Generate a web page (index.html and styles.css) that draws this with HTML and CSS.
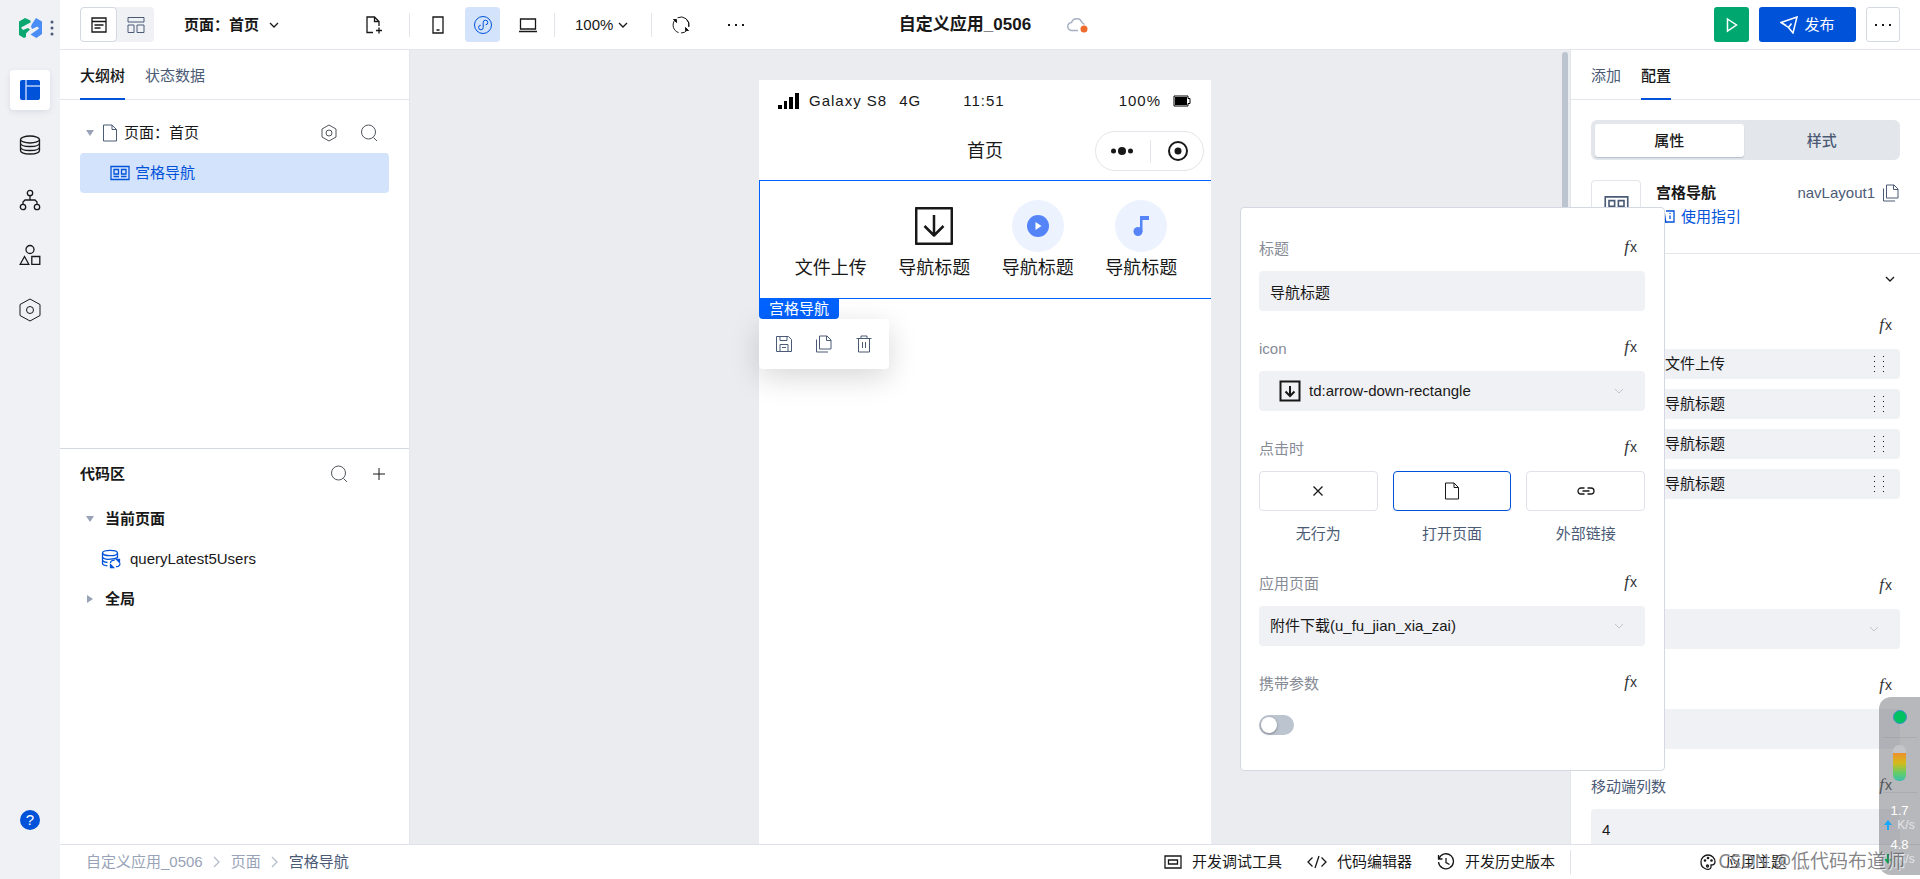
FILE: index.html
```html
<!DOCTYPE html>
<html lang="zh-CN">
<head>
<meta charset="utf-8">
<meta name="viewport" content="width=device-width, initial-scale=1">
<title>自定义应用_0506</title>
<link rel="stylesheet" href="styles.css">
</head>
<body>
<svg class="sprite" aria-hidden="true">
  <symbol id="i-chevron" viewBox="0 0 10 10"><path d="M1 3l4 4 4-4"/></symbol>
  <symbol id="i-next" viewBox="0 0 10 12"><path d="M2 1l5 5-5 5"/></symbol>
  <symbol id="i-search" viewBox="0 0 18 18"><circle cx="8.500" cy="8" r="7"/><path d="M13.500 13.500l3.500 3.500"/></symbol>
  <symbol id="i-hex" viewBox="0 0 22 24"><path d="M11 1l10 5.500v11L11 23 1 17.500v-11z"/><circle cx="11" cy="12" r="3.500"/></symbol>
  <symbol id="i-hex-small" viewBox="0 0 16 18"><path d="M8 1l7 4v8l-7 4-7-4V5z"/><circle cx="8" cy="9" r="3"/></symbol>
  <symbol id="i-page" viewBox="0 0 16 18"><path d="M1.500 1h8.500l4.500 4.500V17h-13zM10 1v4.500h4.500"/></symbol>
  <symbol id="i-copy" viewBox="0 0 18 18"><path d="M4.500 1h7.500l4 4v9H4.500zM11.500 1v4.500H16M1.500 4.500V17H13"/></symbol>
  <symbol id="i-layout" viewBox="0 0 20 16"><path d="M1 1.500h18v13H1zM4 4.500h4.500v4.500H4zM11.500 4.500H16v4.500h-4.500zM3.500 11.500H9M11 11.500h5.500"/></symbol>
  <symbol id="i-grip" viewBox="0 0 12 18"><path d="M1 1.500h1M1 6.500h1M1 11.500h1M1 16.500h1M10 1.500h1M10 6.500h1M10 11.500h1M10 16.500h1" stroke-width="1"/></symbol>
  <symbol id="i-down-box" viewBox="0 0 22 22"><path d="M1.500 1.500h19v19h-19zM11 6v10M6.500 11.500L11 16l4.500-4.500"/></symbol>
  <symbol id="i-dots" viewBox="0 0 18 4"><path d="M1 2h2M8 2h2M15 2h2" stroke-width="2"/></symbol>
</svg>
<div class="app">
  <nav class="rail" aria-label="主导航">
    <div class="brand">
      <svg width="24" height="20" viewBox="0 0 24 20"><path fill="#0aa870" d="M0 3.500L6 0l5.500 2.500v2L2 9.500 4 12l5-2 2 1.500-4 4V19l-2 1-5-3z"/><path fill="#4a8df6" d="M12 8.500L13 6l4-6 6 3.500V16l-5.500 4-6-3.500L20 10.500l-1.500-2L13 11z"/></svg>
      <svg width="4" height="16" viewBox="0 0 4 16"><g fill="#4b5b76"><circle cx="2" cy="2" r="1.500"/><circle cx="2" cy="8" r="1.500"/><circle cx="2" cy="14" r="1.500"/></g></svg>
    </div>
    <button class="rail-btn is-active" aria-label="页面设计"><svg width="20" height="20" viewBox="0 0 20 20"><rect width="20" height="20" rx="2" fill="#0052d9"/><path d="M6 0v20M6 6h14" stroke="#b9d0f6" stroke-width="1.500"/></svg></button>
    <button class="rail-btn" aria-label="数据源"><svg class="ic ic-bold" width="22" height="20" viewBox="0 0 22 20"><ellipse cx="11" cy="4.500" rx="9.500" ry="3.500"/><path d="M1.500 4.500v11c0 2 4 3.500 9.500 3.500s9.500-1.500 9.500-3.500v-11M1.500 8c0 2.200 4 3.500 9.500 3.500S20.500 10.200 20.500 8M1.500 12c0 2.200 4 3.500 9.500 3.500s9.500-1.300 9.500-3.500"/></svg></button>
    <button class="rail-btn" aria-label="流程"><svg class="ic ic-bold" width="22" height="22" viewBox="0 0 22 22"><circle cx="11" cy="4" r="2.700"/><circle cx="4" cy="18" r="2.700"/><circle cx="18" cy="18" r="2.700"/><path d="M11 6.700V11M4 15.300V13l2-2h10l2 2v2.300"/></svg></button>
    <button class="rail-btn" aria-label="素材"><svg class="ic ic-bold" width="22" height="22" viewBox="0 0 22 22"><circle cx="11" cy="5.500" r="4"/><path d="M5.500 12.500l4.300 7.800H1.200zM12.800 12.500h8v7.800h-8z"/></svg></button>
    <button class="rail-btn" aria-label="设置"><svg class="ic" width="22" height="24"><use href="#i-hex"/></svg></button>
    <button class="rail-help" aria-label="帮助">?</button>
  </nav>

  <div class="main">
    <header class="topbar">
      <div class="tools">
        <div class="view-switch">
          <button class="is-active" aria-label="大纲视图"><svg class="ic ic-bold" width="18" height="18" viewBox="0 0 18 18"><path d="M2 2h14v14H2zM2 5.500h14M4.500 9h9M4.500 12h6"/></svg></button>
          <button aria-label="布局视图"><svg class="ic ic-slate" width="18" height="18" viewBox="0 0 18 18"><path d="M1 1.500h16V6H1zM1 9h6v7.500H1zM10 9h7v7.500h-7z"/></svg></button>
        </div>
        <button class="page-pick">页面：首页 <svg class="ic ic-bold" width="10" height="10"><use href="#i-chevron"/></svg></button>
        <button class="tool tool-new" aria-label="新建页面"><svg class="ic ic-bold" width="18" height="18" viewBox="0 0 18 18"><path d="M8 16.500H2V1h7.500L14 5.500V10M9.500 1v4.500H14M14 11.500v6M11 14.500h6"/></svg></button>
        <span class="rule"></span>
        <div class="devices">
          <button class="tool" aria-label="手机"><svg class="ic ic-bold" width="12" height="18" viewBox="0 0 12 18"><path d="M1 1h10v16H1zM4.500 14h3"/></svg></button>
          <button class="tool is-active" aria-label="小程序"><svg class="ic ic-blue" width="20" height="20" viewBox="0 0 20 20"><circle cx="10" cy="10" r="8.500"/><path d="M7.800 10.200a2.300 2.300 0 1 0 2.400 2.300v-5a2.300 2.300 0 1 1 2.400 2.300"/></svg></button>
          <button class="tool" aria-label="电脑"><svg class="ic ic-bold" width="18" height="16" viewBox="0 0 18 16"><path d="M1.500 2h15v10h-15zM0 14.500h18"/></svg></button>
        </div>
        <span class="rule"></span>
        <button class="zoom-pick">100% <svg class="ic ic-bold" width="10" height="10"><use href="#i-chevron"/></svg></button>
        <span class="rule"></span>
        <button class="tool tool-refresh" aria-label="刷新"><svg class="ic" width="20" height="20" viewBox="0 0 20 20"><path d="M7.500 17.600A8 8 0 0 1 3.500 5.500M6.500 2.800a8 8 0 0 1 11.300 9M16.300 15a8 8 0 0 1-6.300 3M16 4.800a8 8 0 0 1 1.800 7"/><path fill="#181818" d="M2.500 4.500h3v3zM17.500 15.500h-3v-3z"/></svg></button>
        <button class="tool tool-more" aria-label="更多"><svg class="ic" width="18" height="4"><use href="#i-dots"/></svg></button>
      </div>
      <div class="doc">
        <h1>自定义应用_0506</h1>
        <svg width="22" height="16" viewBox="0 0 22 16"><path d="M11 13.500H5a4 4 0 0 1-.5-8 5.500 5.500 0 0 1 10.500 0l2.500 2" fill="none" stroke="#a6b0c2" stroke-width="1.500"/><circle cx="17" cy="12" r="3.500" fill="#ed6c2d"/></svg>
      </div>
      <div class="actions">
        <button class="btn-run" aria-label="预览"><svg width="14" height="16" viewBox="0 0 14 16"><path d="M2.500 2l9 6-9 6z" fill="none" stroke="#fff" stroke-width="1.500"/></svg></button>
        <button class="btn-publish"><svg width="18" height="18" viewBox="0 0 18 18"><path d="M1 6.500L17 1l-4 16-4.500-5.500zM8.500 11.500l3-4M1 6.500l5 3" fill="none" stroke="#fff" stroke-width="1.500"/></svg>发布</button>
        <button class="btn-more" aria-label="更多操作"><svg class="ic" width="18" height="4"><use href="#i-dots"/></svg></button>
      </div>
    </header>

    <div class="work">
      <aside class="outline">
        <div class="tabs"><button class="tab is-active">大纲树</button><button class="tab">状态数据</button></div>
        <div class="tree">
          <div class="row"><span class="caret caret-open"></span><svg class="ic ic-slate" width="16" height="18"><use href="#i-page"/></svg><span class="grow">页面：首页</span>
            <button class="mini" aria-label="页面设置"><svg class="ic ic-gray" width="16" height="18"><use href="#i-hex-small"/></svg></button>
            <button class="mini" aria-label="搜索组件"><svg class="ic ic-gray" width="18" height="18"><use href="#i-search"/></svg></button></div>
          <div class="row row-selected"><svg class="ic ic-blue ic-bold" width="20" height="16"><use href="#i-layout"/></svg>宫格导航</div>
        </div>
        <section class="code">
          <div class="code-head"><h2>代码区</h2>
            <button class="mini" aria-label="搜索代码"><svg class="ic ic-gray" width="18" height="18"><use href="#i-search"/></svg></button>
            <button class="mini" aria-label="新建代码"><svg class="ic" width="12" height="12" viewBox="0 0 12 12"><path d="M6 0v12M0 6h12"/></svg></button></div>
          <div class="row group"><span class="caret caret-open"></span>当前页面</div>
          <div class="row query"><svg class="ic ic-blue ic-bold" width="20" height="20" viewBox="0 0 20 20"><ellipse cx="9" cy="4" rx="7.500" ry="2.700"/><path d="M1.500 4v10.500c0 1.300 2 2 5 2.300M16.500 4v5M1.500 8c1 2 5 2.500 8 2.200 3 0 5-.5 7-1.500M1.500 11.500c1 1.300 3 1.800 5 2"/><path d="M9.500 14c0-2 2-3 4-2.500M19 14.500c0 2-2 3.500-4 3"/><path fill="#0052d9" d="M15.500 10.500h3v3zM9.500 18.500v-3l3 3z"/></svg>queryLatest5Users</div>
          <div class="row group"><span class="caret"></span>全局</div>
        </section>
      </aside>

      <main class="canvas">
        <div class="stage">
          <div class="phone">
            <div class="status">
              <div class="status-left"><svg width="22" height="16" viewBox="0 0 22 16"><path d="M1 12h4v4H1zM7 8h3v8H7zM12 4h4v12h-4zM18 0h4v16h-4z"/></svg><span>Galaxy S8</span><span>4G</span></div>
              <span>11:51</span>
              <div class="status-right"><span>100%</span><svg width="18" height="12" viewBox="0 0 18 12"><path d="M1 1h14v2.500h2v5h-2V11H1z" fill="none" stroke="#000"/><path d="M2 2h12v8H2z"/></svg></div>
            </div>
            <div class="navbar"><span></span><span>首页</span>
              <div class="capsule"><svg width="22" height="8" viewBox="0 0 22 8"><g fill="#181818"><circle cx="2.500" cy="4" r="2.500"/><circle cx="11" cy="4" r="4"/><circle cx="19.500" cy="4" r="2.500"/></g></svg><i></i><svg width="20" height="20" viewBox="0 0 20 20"><circle cx="10" cy="10" r="9" fill="none" stroke="#181818" stroke-width="2"/><circle cx="10" cy="10" r="3.500" fill="#181818"/></svg></div>
            </div>
            <div class="grid-nav">
              <div class="cell"><div class="pic"></div>文件上传</div>
              <div class="cell"><div class="pic"><svg width="38" height="38" viewBox="0 0 38 38"><path d="M1.200 1.200h35.600v35.600H1.200zM19 8v21M9.500 19l9.500 9.500 9.500-9.500" fill="none" stroke="#181818" stroke-width="2.500" stroke-linejoin="round"/></svg></div>导航标题</div>
              <div class="cell"><div class="pic pic-round"><svg width="22" height="22" viewBox="0 0 22 22"><circle cx="11" cy="11" r="11" fill="#5584f8"/><path d="M8.500 7v8l6-4z" fill="#fff"/></svg></div>导航标题</div>
              <div class="cell"><div class="pic pic-round"><svg width="16" height="20" viewBox="0 0 16 20"><path d="M7 0h9v4H9.500v12H7z" fill="#5584f8"/><circle cx="5" cy="15.500" r="4.500" fill="#5584f8"/></svg></div>导航标题</div>
              <div class="handle">
                <span class="handle-tag">宫格导航</span>
                <div class="handle-tools">
                  <button aria-label="保存"><svg class="ic ic-slate" width="18" height="18" viewBox="0 0 18 18"><path d="M1.500 1.500h12l3 3v12h-15zM5 1.500v4h7v-4M5 16.500v-7h8v7M7 12.500h4"/></svg></button>
                  <button aria-label="复制"><svg class="ic ic-slate" width="18" height="18"><use href="#i-copy"/></svg></button>
                  <button aria-label="删除"><svg class="ic ic-slate" width="18" height="18" viewBox="0 0 18 18"><path d="M1.500 3.500h15M6 3.500V1h6v2.500M3.500 3.500V17h11V3.500M7.500 7v6M10.500 7v6"/></svg></button>
                </div>
              </div>
            </div>
          </div>
        </div>
        <div class="scroll"><div class="scroll-thumb"></div></div>
      </main>

      <aside class="props">
        <div class="tabs"><button class="tab">添加</button><button class="tab is-active">配置</button></div>
        <div class="props-body">
          <div class="segment"><button class="is-active">属性</button><button>样式</button></div>
          <div class="comp">
            <div class="comp-icon"><svg class="ic ic-slate ic-bold" width="25" height="20"><use href="#i-layout"/></svg></div>
            <div class="comp-info">
              <div class="comp-line"><h2>宫格导航</h2><span class="comp-id">navLayout1</span><button class="plain" aria-label="复制标识"><svg class="ic ic-slate" width="18" height="18"><use href="#i-copy"/></svg></button></div>
              <a class="guide" href="#guide"><svg class="ic ic-blue ic-bold" width="20" height="16" viewBox="0 0 20 16"><path d="M10 2h8v11H2V2h6l2 12M14 4v1M14 6.500V10"/></svg>使用指引</a>
            </div>
          </div>
        </div>
        <div class="props-body props-section">
          <button class="fold" aria-label="收起"><svg class="ic ic-bold" width="10" height="10"><use href="#i-chevron"/></svg></button>
          <div class="field">
            <div class="field-head"><button class="fx" aria-label="绑定导航列表"><i>f</i>x</button></div>
            <div class="items">
              <button class="item"><span>文件上传</span><svg class="ic" width="12" height="18"><use href="#i-grip"/></svg></button>
              <button class="item"><span>导航标题</span><svg class="ic" width="12" height="18"><use href="#i-grip"/></svg></button>
              <button class="item"><span>导航标题</span><svg class="ic" width="12" height="18"><use href="#i-grip"/></svg></button>
              <button class="item"><span>导航标题</span><svg class="ic" width="12" height="18"><use href="#i-grip"/></svg></button>
            </div>
          </div>
          <div class="field field-apart">
            <div class="field-head"><button class="fx" aria-label="绑定选项"><i>f</i>x</button></div>
            <div class="box"><select aria-label="选项"><option></option></select><svg class="ic ic-faint" width="10" height="10"><use href="#i-chevron"/></svg></div>
          </div>
          <div class="field">
            <div class="field-head"><button class="fx" aria-label="绑定列数"><i>f</i>x</button></div>
            <div class="box"><input aria-label="列数" type="text"></div>
          </div>
          <div class="field">
            <div class="field-head"><label class="label-dark" for="cols">移动端列数</label><button class="fx" aria-label="绑定移动端列数"><i>f</i>x</button></div>
            <div class="box"><input id="cols" type="text" value="4"></div>
          </div>
        </div>
      </aside>
    </div>

    <footer class="bottombar">
      <nav class="crumbs" aria-label="路径"><a href="#app">自定义应用_0506</a><svg class="ic ic-bold" width="10" height="12"><use href="#i-next"/></svg><a href="#pages">页面</a><svg class="ic ic-bold" width="10" height="12"><use href="#i-next"/></svg><a class="is-current" href="#nav">宫格导航</a></nav>
      <div class="dev">
        <button><svg class="ic ic-bold" width="18" height="16" viewBox="0 0 18 16"><path d="M1 2h16v12H1zM4.500 6h9v4h-9z"/></svg>开发调试工具</button>
        <button><svg class="ic ic-bold" width="20" height="16" viewBox="0 0 20 16"><path d="M5.500 3.500L1 8l4.500 4.500M14.500 3.500L19 8l-4.500 4.500M12 2L8 14"/></svg>代码编辑器</button>
        <button><svg class="ic ic-bold" width="18" height="18" viewBox="0 0 18 18"><path d="M2 5.500A7.500 7.500 0 1 1 1.500 9M1.500 2v4h4M9 5v4.500l3.500 2"/></svg>开发历史版本</button>
      </div>
      <div class="theme"><button><svg class="ic ic-bold" width="16" height="18" viewBox="0 0 16 18"><path d="M5 15.500C2 14.500 1 12 1 9a7 7 0 0 1 14 0c0 3-2 3-4 3v2c0 2-3 3.500-6 1.500z"/><circle cx="5" cy="7.500" r=".7"/><circle cx="8" cy="5" r=".7"/><circle cx="11.500" cy="7.500" r=".7"/><circle cx="7.500" cy="13" r="1"/></svg>应用主题</button></div>
    </footer>
  </div>

  <form class="popup">
    <div class="field">
      <div class="field-head"><label for="p-title">标题</label><button type="button" class="fx" aria-label="绑定标题"><i>f</i>x</button></div>
      <div class="box"><input id="p-title" type="text" value="导航标题"></div>
    </div>
    <div class="field">
      <div class="field-head"><label for="p-icon">icon</label><button type="button" class="fx" aria-label="绑定图标"><i>f</i>x</button></div>
      <div class="box box-icon"><svg class="ic ic-heavy" width="22" height="22"><use href="#i-down-box"/></svg><select id="p-icon"><option>td:arrow-down-rectangle</option></select><svg class="ic ic-faint" width="10" height="10"><use href="#i-chevron"/></svg></div>
    </div>
    <div class="field" role="radiogroup" aria-label="点击时">
      <div class="field-head"><span class="legend">点击时</span><button type="button" class="fx" aria-label="绑定点击行为"><i>f</i>x</button></div>
      <div class="choices">
        <label class="choice"><input type="radio" name="act"><span class="choice-box"><svg class="ic ic-bold" width="10" height="10" viewBox="0 0 10 10"><path d="M.5.5l9 9M9.500.5l-9 9"/></svg></span>无行为</label>
        <label class="choice"><input type="radio" name="act" checked><span class="choice-box"><svg class="ic" width="16" height="18"><use href="#i-page"/></svg></span>打开页面</label>
        <label class="choice"><input type="radio" name="act"><span class="choice-box"><svg class="ic ic-bold" width="18" height="10" viewBox="0 0 18 10"><path d="M7.500 2H4a3 3 0 0 0 0 6h3.500M10.500 2H14a3 3 0 0 1 0 6h-3.500M5.500 5h7"/></svg></span>外部链接</label>
      </div>
    </div>
    <div class="field">
      <div class="field-head"><label for="p-page">应用页面</label><button type="button" class="fx" aria-label="绑定应用页面"><i>f</i>x</button></div>
      <div class="box"><select id="p-page"><option>附件下载(u_fu_jian_xia_zai)</option></select><svg class="ic ic-faint" width="10" height="10"><use href="#i-chevron"/></svg></div>
    </div>
    <div class="field">
      <div class="field-head"><label for="p-param">携带参数</label><button type="button" class="fx" aria-label="绑定携带参数"><i>f</i>x</button></div>
      <input class="switch" id="p-param" type="checkbox">
    </div>
  </form>

  <div class="monitor">
    <span class="lamp"></span>
    <div class="gauge-wrap"><span class="gauge"></span></div>
    <strong>1.7</strong>
    <span class="rate"><svg width="8" height="10" viewBox="0 0 8 10"><path d="M4 0l4 5H5v5H3V5H0z" fill="#1aa7ff"/></svg>K/s</span>
    <strong>4.8</strong>
    <span class="rate"><svg width="8" height="10" viewBox="0 0 8 10"><path d="M4 10l4-5H5V0H3v5H0z" fill="#0aa84f"/></svg>K/s</span>
  </div>
  <div class="watermark">CSDN @低代码布道师</div>
</div>
</body>
</html>
```
FILE: styles.css
```css
* { box-sizing: border-box; }
body {
  margin: 0;
  font: 15px/24px "Liberation Sans", "Noto Sans CJK SC", sans-serif;
  color: #181818;
  background: #fff;
}
button, input, select { font: inherit; color: inherit; }
button { border: 0; padding: 0; background: none; white-space: nowrap; }
h1, h2 { margin: 0; font-size: 15px; line-height: 24px; }
a { text-decoration: none; color: inherit; }
svg { display: block; flex: none; }
.sprite { position: absolute; width: 0; height: 0; }

.ic { fill: none; stroke: #181818; stroke-width: 1; }
.ic-bold { stroke-width: 1.3; }
.ic-heavy { stroke-width: 2; }
.ic-slate { stroke: #4b5b76; }
.ic-gray { stroke: #50545c; }
.ic-blue { stroke: #0052d9; }
.ic-faint { stroke: #c0c6d0; }

.app { position: relative; display: flex; height: 100vh; overflow: hidden; }
.main { flex: 1; min-width: 0; display: flex; flex-direction: column; }

/* Left rail */
.rail {
  flex: none; width: 60px; padding: 0 10px 49px;
  display: flex; flex-direction: column; gap: 15px;
  background: #f0f1f5;
}
.brand { display: flex; align-items: center; gap: 7px; height: 55px; padding-left: 9px; }
.rail-btn { display: grid; place-items: center; height: 40px; border-radius: 4px; }
.rail-btn.is-active { background: #fff; box-shadow: 0 2px 6px rgba(30, 50, 90, .1); }
.rail-help {
  width: 20px; height: 20px; margin: auto auto 0;
  border-radius: 50%; background: #0052d9; color: #fff; line-height: 20px;
}

/* Top bar */
.topbar {
  flex: none; height: 50px; padding: 0 20px;
  display: grid; grid-template-columns: 1fr auto 1fr; align-items: center;
  border-bottom: 1px solid #e3e5ea;
}
.tools, .devices, .actions, .doc { display: flex; align-items: center; }
.view-switch { display: flex; background: #f0f1f5; border-radius: 4px; }
.view-switch button { width: 37px; height: 35px; display: grid; place-items: center; border-radius: 4px; }
.view-switch .is-active { background: #fff; border: 1px solid #d3d8e2; }
.page-pick, .zoom-pick { display: flex; align-items: center; gap: 10px; }
.page-pick { margin-left: 30px; font-weight: 700; }
.zoom-pick { gap: 5px; margin: 0 23px 0 20px; }
.tool { width: 35px; height: 35px; display: grid; place-items: center; border-radius: 4px; }
.tool.is-active { background: #d4e3fc; }
.tool-new { margin: 0 18px 0 77px; }
.devices { gap: 10px; padding: 0 9px 0 10px; }
.tool-refresh { margin: 0 20px 0 11px; }
.rule { width: 1px; height: 24px; background: #e3e5ea; }
.doc { gap: 36px; padding-left: 8px; }
.doc h1 { font-size: 17px; white-space: nowrap; }
.actions { justify-content: flex-end; gap: 10px; }
.actions button { height: 35px; border-radius: 3px; display: flex; align-items: center; justify-content: center; }
.btn-run { width: 35px; background: #00a870; }
.btn-publish { width: 97px; gap: 6px; background: #0052d9; color: #fff; }
.btn-more { width: 34px; border: 1px solid #d3d8e2; }

.work { flex: 1; min-height: 0; display: flex; }

.tabs { flex: none; display: flex; gap: 20px; height: 50px; padding: 0 20px; border-bottom: 1px solid #e3e5ea; }
.tab { height: 50px; padding-top: 3px; color: #4b5b76; border-bottom: 2px solid transparent; }
.tab.is-active { color: #181818; font-weight: 500; border-color: #0052d9; }

/* Outline panel */
.outline { flex: none; width: 350px; display: flex; flex-direction: column; border-right: 1px solid #e3e5ea; }
.tree { flex: 1; padding: 13px 20px; }
.row { display: flex; align-items: center; height: 40px; gap: 6px; }
.tree .row { padding-left: 6px; }
.tree .row .caret { margin-right: 2px; }
.grow { flex: 1; }
.mini { width: 20px; height: 24px; margin-right: 10px; display: grid; place-items: center; }
.mini + .mini { margin-left: 4px; }
.tree .row-selected { padding-left: 30px; gap: 5px; border-radius: 4px; background: #d4e3fc; color: #0052d9; }
.caret { width: 8px; height: 8px; border: 4px solid transparent; border-left: 6px solid #98a3b7; border-right: 0; margin-left: 1px; margin-right: -1px; }
.caret-open { height: 6px; margin: 0; border: 4px solid transparent; border-top: 6px solid #98a3b7; border-bottom: 0; }
.code { height: 396px; padding: 0 20px; border-top: 1px solid #d3d8e2; }
.code-head { display: flex; align-items: center; height: 50px; }
.code-head h2 { flex: 1; }
.code-head .mini { margin-right: 0; }
.code-head .mini + .mini { margin-left: 20px; }
.group { padding-left: 6px; gap: 11px; font-weight: 700; }
.query { padding-left: 21px; gap: 9px; }

/* Canvas */
.canvas { flex: 1; min-width: 0; display: flex; background: #ebecf0; overflow: hidden; }
.stage { flex: 1; display: flex; justify-content: center; padding-top: 30px; }
.phone { width: 100%; max-width: 452px; background: #fff; }
.status {
  display: grid; grid-template-columns: 1fr auto 1fr; align-items: center;
  height: 42px; padding: 0 20px 0 18px; letter-spacing: 1px;
}
.status-left, .status-right { display: flex; align-items: center; gap: 10px; }
.status-left span + span { margin-left: 2px; }
.status-right { justify-content: flex-end; gap: 12px; }
.navbar {
  display: grid; grid-template-columns: 1fr auto 1fr; align-items: center;
  height: 58px; padding-right: 7px; font-size: 18px;
}
.navbar > :nth-child(2) { padding-left: 7px; }
.capsule {
  justify-self: end; display: flex; align-items: center; justify-content: space-between;
  width: 109px; height: 40px; padding: 0 15px; border: 1px solid #e3e5ea; border-radius: 20px;
}
.capsule i { width: 1px; height: 23px; background: #e3e5ea; margin: 0 1px 0 0; }
.grid-nav {
  position: relative; display: grid; grid-template-columns: repeat(4, 1fr);
  padding: 19px 18px 17px 19px; border: 1px solid #0062ff; border-right: 0;
}
.cell { display: flex; flex-direction: column; align-items: center; gap: 3px; font-size: 18px; line-height: 26px; }
.pic { display: grid; place-items: center; width: 52px; height: 52px; border-radius: 50%; }
.pic-round { background: #edf2ff; }
.handle { position: absolute; left: -1px; top: 100%; }
.handle-tag {
  display: block; width: 80px; line-height: 21px; text-align: center;
  background: #0062ff; color: #fff; border-radius: 0 0 4px 4px;
}
.handle-tools {
  display: flex; width: 130px; height: 50px; padding: 0 5px;
  background: #fff; border-radius: 4px; box-shadow: 0 8px 30px rgba(0, 0, 0, .16);
}
.handle-tools button { flex: 1; display: grid; place-items: center; }
.scroll { width: 10px; padding: 2px; }
.scroll-thumb { height: 240px; background: #bcc4d0; border-radius: 3px; }

/* Property panel */
.props { flex: none; width: 350px; border-left: 1px solid #e3e5ea; overflow: hidden; background: #fff; }
.props-body { padding: 20px 20px 0; }
.segment { display: flex; gap: 4px; height: 40px; padding: 4px 4px 3px; border-radius: 6px; background: #e3e6eb; }
.segment button { flex: 1; font-weight: 500; color: #4b5b76; border-radius: 3px; }
.segment .is-active { background: #fff; color: #181818; box-shadow: 0 1px 1px #b4bdcc; }
.comp { display: flex; gap: 15px; padding: 20px 0 23px; }
.comp-icon { display: grid; place-items: center; width: 50px; height: 50px; border: 1px solid #e3e5ea; border-radius: 4px; }
.comp-info { flex: 1; padding-top: 1px; }
.comp-line { display: flex; align-items: center; }
.comp-line h2 { flex: 1; }
.comp-id { color: #4b5b76; margin-right: 7px; }
.guide { display: flex; align-items: center; gap: 5px; color: #0052d9; }
.props-section { padding-top: 13px; border-top: 1px solid #e3e5ea; }
.fold { display: grid; place-items: center end; width: 100%; height: 24px; padding-right: 5px; margin-bottom: 24px; }
.items { display: grid; gap: 10px; }
.item {
  display: flex; align-items: center; justify-content: space-between; height: 30px;
  padding: 0 15px 0 74px; background: #f0f1f5; border-radius: 4px;
}

/* Form fields */
.field { margin-bottom: 26px; }
.field-head { display: flex; align-items: center; justify-content: space-between; height: 24px; margin-bottom: 10px; color: #868b95; }
.label-dark { color: #4b5b76; }
.fx { margin: 0 8px 0 auto; line-height: 18px; height: 24px; padding-bottom: 4px; color: #303338; font-size: 14px; }
.fx i { margin-right: 1px; font: italic 17px/18px "Liberation Serif", serif; }
.field-apart { margin-top: 76px; }
.box { display: flex; align-items: center; height: 40px; padding: 0 21px 0 11px; background: #f0f1f5; border-radius: 4px; }
.box input, .box select {
  flex: 1; min-width: 0; height: 40px; padding: 0; border: 0; outline: 0;
  background: none; appearance: none;
}
.box-icon { gap: 8px; padding-left: 20px; }
.choices { display: grid; grid-template-columns: repeat(3, 1fr); gap: 15px; }
.choice { position: relative; text-align: center; color: #4b5b76; }
.choice input { position: absolute; opacity: 0; margin: 0; }
.choice-box {
  display: grid; place-items: center; height: 40px; margin-bottom: 11px;
  border: 1px solid #dfe2e8; border-radius: 4px;
}
.choice input:checked + .choice-box { border-color: #0052d9; }
.switch {
  display: block; appearance: none; width: 35px; height: 20px; margin: 19px 0 0; padding: 2px;
  border-radius: 10px; background: #bcc4d0;
}
.switch::before {
  content: ""; display: block; width: 16px; height: 16px; border-radius: 50%;
  background: #fff; box-shadow: 0 1px 3px rgba(0, 0, 0, .35);
}
.popup {
  position: absolute; top: 207px; right: 255px; width: 425px; padding: 29px 19px 35px 18px;
  background: #fff; border: 1px solid #d3d8e2; border-radius: 4px;
}
.popup .field:last-child { margin-bottom: 0; }

/* Bottom bar */
.bottombar { flex: none; display: flex; align-items: center; height: 35px; border-top: 1px solid #dfe2e8; background: #fff; }
.crumbs { flex: 1; display: flex; align-items: center; gap: 9px; padding-left: 26px; color: #98a3b7; }
.crumbs .ic { stroke: #b4bdcc; }
.crumbs .is-current { color: #4b5b76; }
.dev { display: flex; gap: 25px; padding-right: 15px; }
.dev button, .theme button { display: flex; align-items: center; gap: 10px; }
.theme { width: 350px; padding-left: 129px; border-left: 1px solid #dfe2e8; }

/* Desktop overlays */
.monitor {
  position: absolute; right: 0; bottom: 4px; width: 41px; height: 178px; padding-top: 13px;
  display: flex; flex-direction: column; align-items: center;
  background: rgba(112, 114, 120, .5); border-radius: 12px 0 0 12px; color: #fff;
}
.lamp { width: 14px; height: 14px; border-radius: 50%; background: #00c261; border: 1px solid #3f8fc8; }
.gauge-wrap {
  width: 34px; margin: 13px 0 10px; padding: 7px 0 11px; display: grid; place-items: center;
  border: solid rgba(90, 92, 98, .12); border-width: 1px 0;
}
.gauge {
  width: 13px; height: 36px; border-radius: 6px;
  background: linear-gradient(#c4c5c8 22%, #ee8f2c 22%, #d4bb1c 50%, #62cd68 78%, #3abfae);
}
.monitor strong { font-weight: 400; font-size: 13px; line-height: 16px; }
.rate { display: flex; align-items: center; gap: 5px; font-size: 12px; line-height: 12px; color: #e3e5ea; margin-bottom: 6px; }
.watermark {
  position: absolute; right: 15px; bottom: 4px; font: 19px/28px "Noto Sans", "Noto Sans CJK SC", sans-serif;
  color: rgba(80, 80, 84, .7); text-shadow: 1px 1px 1px rgba(255, 255, 255, .8); pointer-events: none;
}
```
